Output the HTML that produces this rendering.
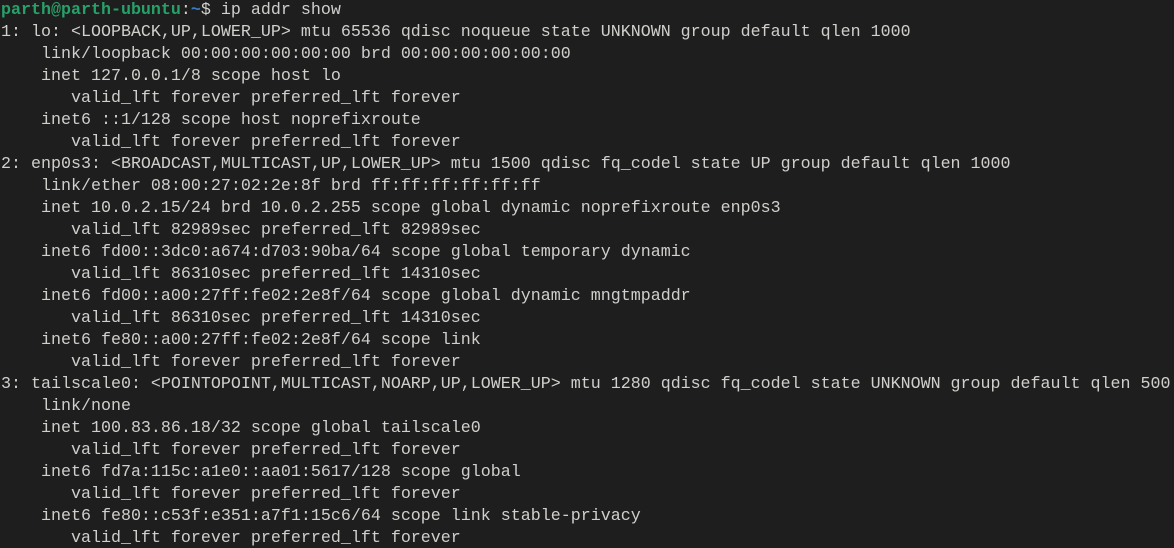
<!DOCTYPE html>
<html><head><meta charset="utf-8"><style>
html,body{margin:0;padding:0;background:#1e1e1e;width:1174px;height:548px;overflow:hidden}
pre{margin:0;padding:0 0 0 1px;font-family:"Liberation Mono",monospace;font-size:16.67px;line-height:22px;color:#d0cfcc;white-space:pre;position:relative;top:0px}
.g{color:#26a269;font-weight:bold}.b{color:#3b78c4;font-weight:bold}
</style></head><body><pre><span class="g">parth@parth-ubuntu</span>:<span class="b">~</span>$ ip addr show
1: lo: &lt;LOOPBACK,UP,LOWER_UP&gt; mtu 65536 qdisc noqueue state UNKNOWN group default qlen 1000
    link/loopback 00:00:00:00:00:00 brd 00:00:00:00:00:00
    inet 127.0.0.1/8 scope host lo
       valid_lft forever preferred_lft forever
    inet6 ::1/128 scope host noprefixroute
       valid_lft forever preferred_lft forever
2: enp0s3: &lt;BROADCAST,MULTICAST,UP,LOWER_UP&gt; mtu 1500 qdisc fq_codel state UP group default qlen 1000
    link/ether 08:00:27:02:2e:8f brd ff:ff:ff:ff:ff:ff
    inet 10.0.2.15/24 brd 10.0.2.255 scope global dynamic noprefixroute enp0s3
       valid_lft 82989sec preferred_lft 82989sec
    inet6 fd00::3dc0:a674:d703:90ba/64 scope global temporary dynamic
       valid_lft 86310sec preferred_lft 14310sec
    inet6 fd00::a00:27ff:fe02:2e8f/64 scope global dynamic mngtmpaddr
       valid_lft 86310sec preferred_lft 14310sec
    inet6 fe80::a00:27ff:fe02:2e8f/64 scope link
       valid_lft forever preferred_lft forever
3: tailscale0: &lt;POINTOPOINT,MULTICAST,NOARP,UP,LOWER_UP&gt; mtu 1280 qdisc fq_codel state UNKNOWN group default qlen 500
    link/none
    inet 100.83.86.18/32 scope global tailscale0
       valid_lft forever preferred_lft forever
    inet6 fd7a:115c:a1e0::aa01:5617/128 scope global
       valid_lft forever preferred_lft forever
    inet6 fe80::c53f:e351:a7f1:15c6/64 scope link stable-privacy
       valid_lft forever preferred_lft forever
</pre></body></html>
